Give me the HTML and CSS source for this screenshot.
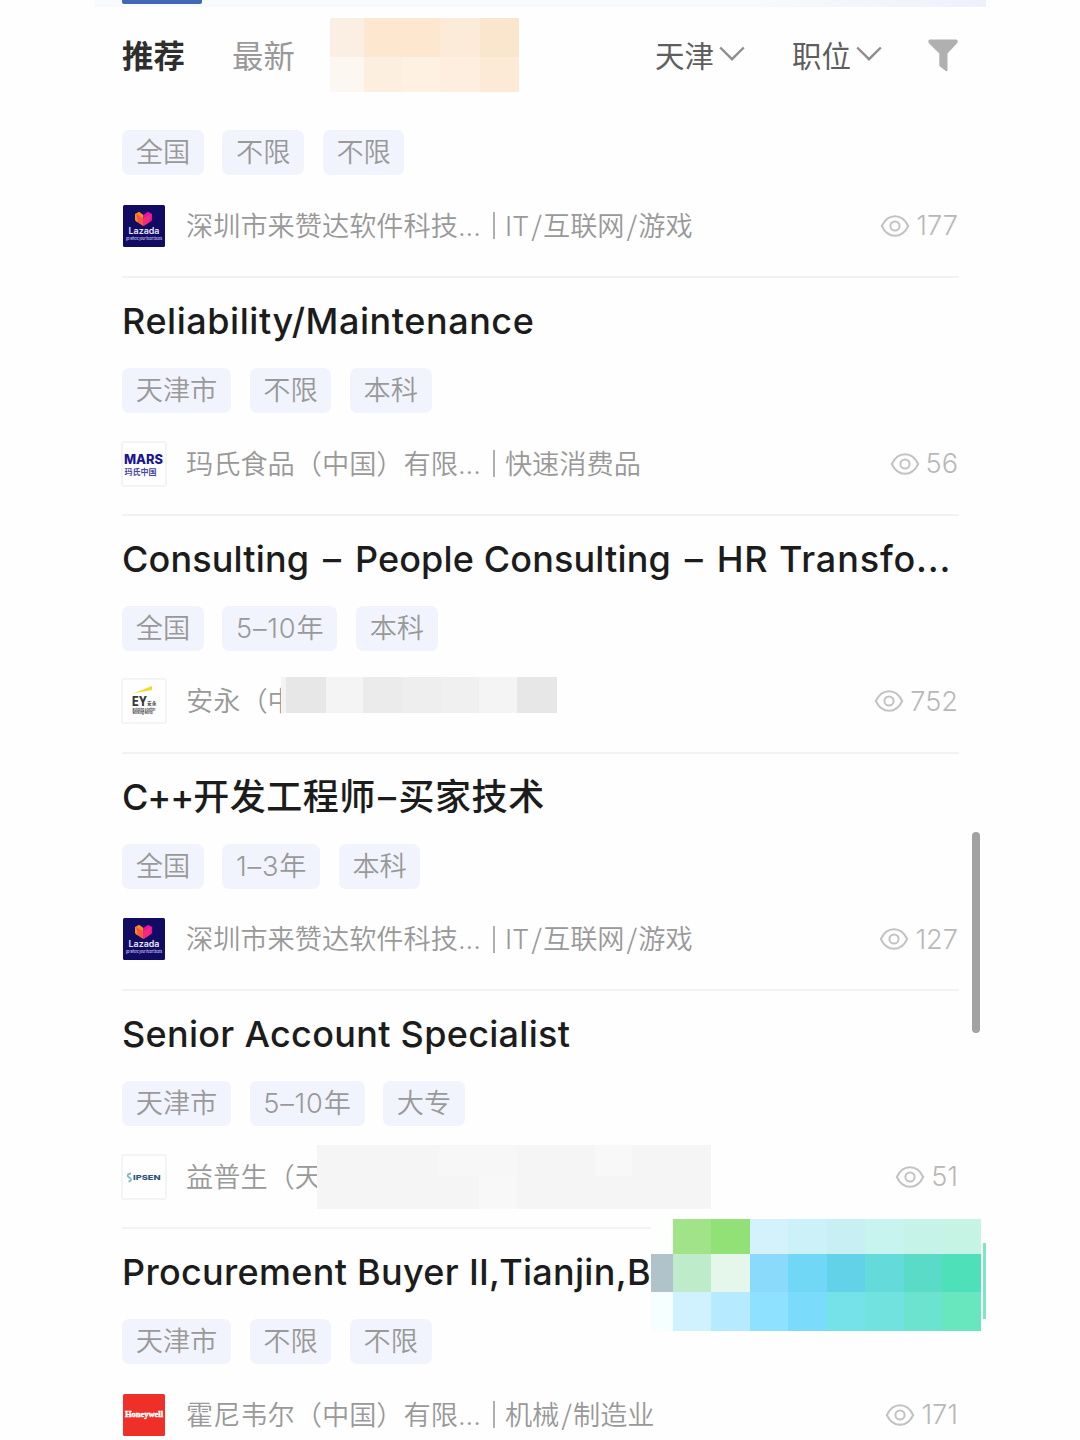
FILE: index.html
```html
<!DOCTYPE html>
<html lang="zh-CN">
<head>
    <meta charset="UTF-8">
    <meta name="viewport" content="width=device-width, initial-scale=1.0">
    <title>职位推荐</title>
    <link rel="stylesheet" href="styles.css">
</head>
<body>
    <svg class="sprite" width="80" height="80">
        <symbol id="eye" viewBox="0 0 30 24">
            <path d="M1.8 12C5 5.2 9.7 2.2 15 2.2S25 5.2 28.2 12C25 18.8 20.3 21.8 15 21.8S5 18.8 1.8 12z" fill="none" stroke="currentColor" stroke-width="2"/>
            <circle cx="15" cy="12" r="4.6" fill="none" stroke="currentColor" stroke-width="2"/>
        </symbol>
        <symbol id="arrow" viewBox="0 0 26 16">
            <path d="M1.2 1.5L13 13.2L24.8 1.5" fill="none" stroke="currentColor" stroke-width="2.4"/>
        </symbol>
        <symbol id="lazada" viewBox="0 0 42 42">
            <rect width="42" height="42" rx="1.5" fill="#110b63"/>
            <path d="M12 9L16 6.8L20.5 10V21L13 16.3Q12 15.6 12 14.3z" fill="#f98a1c"/>
            <path d="M29 9L25 6.8L20.5 10V21L28 16.3Q29 15.6 29 14.3z" fill="#ee0fa5"/>
            <path d="M13 8.7L20.5 13.5L28 8.7L26 17.5L20.5 21L15 17.5z" fill="#f43c62" opacity=".65"/>
            <text x="5.5" y="29" textLength="31" lengthAdjust="spacingAndGlyphs" font-size="9" font-weight="600" fill="#e8e6fa">Lazada</text>
            <text x="3" y="34.8" textLength="36" lengthAdjust="spacingAndGlyphs" font-size="4.2" font-weight="600" font-style="italic" fill="#c4c0ee">go where your heart beats</text>
        </symbol>
    </svg>

    <div class="app">
        <div class="top-strip"><div class="top-active"></div></div>

        <div class="filters">
            <div class="tab active">推荐</div>
            <div class="tab">最新</div>
            <div class="mosaic mosaic-tab"></div>
            <div class="select"><span>天津</span><svg class="arrow"><use href="#arrow"/></svg></div>
            <div class="select"><span>职位</span><svg class="arrow"><use href="#arrow"/></svg></div>
            <svg class="funnel" viewBox="0 0 30 33">
                <path d="M2 .5H28Q30 .5 29.7 2.5Q29.6 3.5 29 4.2L19.5 14.6V31Q19.4 32.8 17.8 31.9L12 27.6Q11.3 27 11.3 26V14.6L1 4.2Q.3 3.5.3 2.5Q.2.5 2 .5z" fill="#b0b0b0"/>
            </svg>
        </div>

        <div class="jobs">
            <div class="job first">
                <div class="tags"><span>全国</span><span>不限</span><span>不限</span></div>
                <div class="company">
                    <svg class="logo"><use href="#lazada"/></svg>
                    <div class="name">深圳市来赞达软件科技<i class="dots">...</i></div>
                    <i class="bar"></i>
                    <div class="industry">IT<i class="slash">/</i>互联网<i class="slash">/</i>游戏</div>
                    <div class="views"><svg class="eye"><use href="#eye"/></svg>177</div>
                </div>
            </div>

            <div class="job">
                <h2 class="title">Reliability/Maintenance</h2>
                <div class="tags"><span>天津市</span><span>不限</span><span>本科</span></div>
                <div class="company">
                    <svg class="logo framed" viewBox="0 0 42 42">
                        <text x="1" y="20.5" textLength="39" lengthAdjust="spacingAndGlyphs" font-size="13" font-weight="800" fill="#1a1591">MARS</text>
                        <text x="1.5" y="31.5" textLength="32" font-size="8" font-weight="700" fill="#4844a0">玛氏中国</text>
                    </svg>
                    <div class="name">玛氏食品（中国）有限<i class="dots">...</i></div>
                    <i class="bar"></i>
                    <div class="industry">快速消费品</div>
                    <div class="views"><svg class="eye"><use href="#eye"/></svg>56</div>
                </div>
            </div>

            <div class="job">
                <h2 class="title tight">Consulting <i class="dash">–</i> People Consulting <i class="dash">–</i> <i class="tail">HR Transfo...</i></h2>
                <div class="tags"><span>全国</span><span><i class="years">5–10</i>年</span><span>本科</span></div>
                <div class="company">
                    <svg class="logo framed" viewBox="0 0 42 42">
                        <path d="M10 13.5L29 6V10z" fill="#f2dc24"/>
                        <text x="9" y="25.5" textLength="15" lengthAdjust="spacingAndGlyphs" font-size="12.5" font-weight="800" fill="#37373d">EY</text>
                        <text x="24" y="25" font-size="4.7" font-weight="700" fill="#37373d">安永</text>
                        <text x="9.5" y="30.5" textLength="23" lengthAdjust="spacingAndGlyphs" font-size="3.8" font-weight="700" fill="#444">Building a better</text>
                        <text x="9.5" y="34" textLength="20" lengthAdjust="spacingAndGlyphs" font-size="3.8" font-weight="700" fill="#444">working world</text>
                    </svg>
                    <div class="name">安永（中<div class="mosaic mosaic-ey"></div></div>
                    <div class="views"><svg class="eye"><use href="#eye"/></svg>752</div>
                </div>
            </div>

            <div class="job">
                <h2 class="title"><i class="cpp">C++</i>开发工程师<i class="dash">–</i>买家技术</h2>
                <div class="tags"><span>全国</span><span><i class="years">1–3</i>年</span><span>本科</span></div>
                <div class="company">
                    <svg class="logo"><use href="#lazada"/></svg>
                    <div class="name">深圳市来赞达软件科技<i class="dots">...</i></div>
                    <i class="bar"></i>
                    <div class="industry">IT<i class="slash">/</i>互联网<i class="slash">/</i>游戏</div>
                    <div class="views"><svg class="eye"><use href="#eye"/></svg>127</div>
                </div>
            </div>

            <div class="job">
                <h2 class="title narrow">Senior Account Specialist</h2>
                <div class="tags"><span>天津市</span><span><i class="years">5–10</i>年</span><span>大专</span></div>
                <div class="company">
                    <svg class="logo framed" viewBox="0 0 42 42">
                        <path d="M8 17.5Q3.5 18 5 20.5L8 23Q8.5 25 5.5 25.5" fill="none" stroke="#82b8c4" stroke-width="1.8"/>
                        <text x="10" y="24.2" textLength="27.5" lengthAdjust="spacingAndGlyphs" font-size="6.8" font-weight="800" fill="#2b5578">IPSEN</text>
                    </svg>
                    <div class="name">益普生（天<div class="mosaic mosaic-ipsen"></div></div>
                    <div class="views"><svg class="eye"><use href="#eye"/></svg>51</div>
                </div>
            </div>

            <div class="job">
                <h2 class="title narrow">Procurement Buyer II,Tianjin,B</h2>
                <div class="tags"><span>天津市</span><span>不限</span><span>不限</span></div>
                <div class="company">
                    <svg class="logo" viewBox="0 0 42 42">
                        <rect width="42" height="42" rx="1.5" fill="#ee3028"/>
                        <text class="serif" x="2" y="22.8" textLength="38" lengthAdjust="spacingAndGlyphs" font-size="7.6" font-weight="700" fill="#fff" stroke="#fff" stroke-width=".4">Honeywell</text>
                    </svg>
                    <div class="name">霍尼韦尔（中国）有限<i class="dots">...</i></div>
                    <i class="bar"></i>
                    <div class="industry">机械<i class="slash">/</i>制造业</div>
                    <div class="views"><svg class="eye"><use href="#eye"/></svg>171</div>
                </div>
            </div>
        </div>

        <div class="scrollbar"></div>
        <div class="float-ad">
            <div class="ad-row ad-top"></div>
            <div class="ad-row ad-mid"></div>
            <div class="ad-row ad-low"></div>
            <div class="ad-edge"></div>
        </div>
    </div>
</body>
</html>
```
FILE: styles.css
```css
* {
    box-sizing: border-box;
}

html,
body {
    height: 1440px;
    overflow: hidden;
}

body {
    margin: 0;
    background-color: #fefefe;
    font-family: Inter, "Noto Sans CJK SC", sans-serif;
}

i {
    font-style: normal;
}

.sprite {
    position: absolute;
}

.app {
    position: relative;
    width: 891px;
    height: 1440px;
    margin-left: 95px;
    overflow: hidden;
}

.top-strip {
    height: 7px;
    padding-left: 27px;
    background: linear-gradient(90deg, #f8f9fc 75%, #eef1fc);
}

.top-active {
    width: 80px;
    height: 4px;
    background-color: #4267b4;
    border-radius: 0 0 2px 2px;
}

/* filter bar */
.filters {
    display: flex;
    align-items: center;
    height: 96px;
    padding: 0 28px 0 27px;
}

.tab {
    width: 110px;
    padding-bottom: 2px;
    font-size: 31.4px;
    color: #999;
    white-space: nowrap;
}

.tab.active {
    color: #2e2e2e;
    font-weight: 700;
}

.tab:nth-child(2) {
    width: 98px;
}

.mosaic-tab {
    width: 189px;
    height: 74px;
    background:
        linear-gradient(90deg, #fbeee3 34px, #fde7ce 34px 110px, #fdebda 110px 150px, #fae5cd 150px) 0 0 / 100% 39px no-repeat,
        linear-gradient(90deg, #fdf7f1 34px, #fdefdf 34px 72px, #fff1e2 72px 110px, #fdeedf 110px 150px, #fdead6 150px) 0 39px / 100% 35px no-repeat;
}

.select {
    display: flex;
    align-items: center;
    margin-left: 136px;
    font-size: 29.5px;
    color: #5e5e5e;
}

.select span {
    padding-bottom: 3px;
}

.select + .select {
    margin-left: 47px;
}

.arrow {
    width: 26px;
    height: 16px;
    margin: -3px 0 0 5px;
    color: #8e8e8e;
}

.funnel {
    width: 30px;
    height: 33px;
    margin-left: auto;
}

/* job list */
.jobs {
    padding: 0 27px;
}

.job {
    height: 237.8px;
    padding-top: 15px;
    border-bottom: 2px solid #f2f2f3;
}

.job.first {
    height: 175px;
    padding-top: 27px;
}

.title {
    height: 56px;
    margin: 0 0 19px;
    font-size: 36px;
    font-weight: 500;
    line-height: 56px;
    letter-spacing: 0.55px;
    color: #1c1c1c;
    white-space: nowrap;
}

.title.tight {
    letter-spacing: 0.15px;
}

.title.narrow {
    letter-spacing: 0.3px;
}

.tail {
    letter-spacing: 0.85px;
}

.dash {
    padding: 0 2px;
}

.tight .dash {
    padding: 0 4px;
}

.cpp {
    letter-spacing: -1.1px;
}

.tags {
    display: flex;
    gap: 18.6px;
}

.tags span {
    height: 45px;
    padding: 0 13.7px;
    border-radius: 7px;
    background-color: #f1f4fd;
    font-size: 27.2px;
    font-weight: 350;
    line-height: 46px;
    color: #999;
    white-space: nowrap;
}

.years {
    letter-spacing: 0.8px;
}

.company {
    display: flex;
    align-items: center;
    height: 44px;
    margin-top: 28.5px;
    padding-right: 1px;
    font-size: 27.2px;
    font-weight: 350;
    color: #999;
    white-space: nowrap;
}

.logo {
    flex: none;
    width: 42px;
    height: 42px;
    margin: 0 21px 0 1px;
}

.logo.framed {
    width: 46px;
    height: 46px;
    margin: 0 19px 0 -1px;
    border: 2px solid #f4f4f5;
    border-radius: 3px;
}

.serif {
    font-family: "Liberation Serif", serif;
}

.name,
.industry {
    position: relative;
    height: 44px;
    line-height: 46px;
}

.dots {
    display: inline-block;
    width: 23px;
    line-height: 1;
}

.slash {
    padding: 0 1px 0 2px;
    font-family: "Noto Sans CJK SC", sans-serif;
    line-height: 1;
}

.bar {
    width: 2px;
    height: 27px;
    margin: 0 10px 0 12px;
    background-color: #b0b0b0;
}

.views {
    display: flex;
    align-items: center;
    margin-left: auto;
    font-weight: 300;
    color: #b8b8b8;
}

.eye {
    width: 30px;
    height: 24px;
    margin-right: 6px;
    color: #c3c3c3;
}

/* blurred-out blocks over company names */
.mosaic-ey {
    position: absolute;
    left: 95px;
    top: -2px;
    width: 276px;
    height: 36px;
    background: linear-gradient(90deg, #f3f3f3 5px, #e7e7e7 5px 45px, #f4f4f4 45px 82px, #ebebeb 82px 121px, #eee 121px 160px, #f0f0f0 160px 198px, #f4f4f4 198px 236px, #e7e7e7 236px);
}

.mosaic-ipsen {
    position: absolute;
    left: 131px;
    top: -10px;
    width: 394px;
    height: 64px;
    background:
        linear-gradient(90deg, #f5f5f5 122px, #f7f7f7 122px 200px, #f5f5f5 200px 278px, #f8f8f8 278px 315px, #f5f5f5 315px) 0 0 / 100% 31px no-repeat,
        linear-gradient(90deg, #f5f5f5 162px, #f8f8f8 162px 200px, #f5f5f5 200px) 0 31px / 100% 33px no-repeat;
}

.scrollbar {
    position: absolute;
    left: 877px;
    top: 832px;
    width: 8px;
    height: 201px;
    border-radius: 4px;
    background-color: #a2a2a2;
}

/* floating banner */
.float-ad {
    position: absolute;
    left: 556px;
    top: 1219px;
    width: 335px;
    height: 112px;
}

.ad-row {
    width: 330px;
}

.ad-top {
    height: 35px;
    background: linear-gradient(90deg, #fdfffd 22px, #a0e388 22px 60px, #92e177 60px 99px, #d4f2fc 99px 137px, #cdf1f9 137px 176px, #c8eff4 176px 214px, #c8f4f0 214px 253px, #c6f3e8 253px 291px, #c5f4e5 291px);
}

.ad-mid {
    height: 38px;
    background: linear-gradient(90deg, #b0c3cb 22px, #beebca 22px 60px, #e5f7eb 60px 99px, #89dafb 99px 137px, #70d7f7 137px 176px, #62d2e9 176px 214px, #65dadb 214px 253px, #5adbc8 253px 291px, #4de0b9 291px);
}

.ad-low {
    height: 39px;
    background: linear-gradient(90deg, #f6ffff 22px, #d0f2ff 22px 60px, #b6ebff 60px 99px, #8ee1ff 99px 137px, #7adcfa 137px 176px, #75e1e9 176px 214px, #71e2dd 214px 253px, #6be3cf 253px 291px, #68e7be 291px);
}

.ad-edge {
    position: absolute;
    left: 332px;
    top: 24px;
    width: 3px;
    height: 76px;
    background-color: #7de6c3;
}
```
